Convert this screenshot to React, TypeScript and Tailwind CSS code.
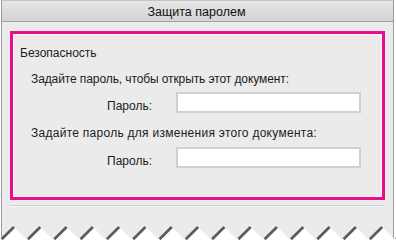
import React from "react";

export default function App() {
  const period = 26.3;
  const peaks = Array.from({ length: 16 }, (_, i) => 13 + period * i);
  const half = period / 2;
  let d = "M0,22 L-2,16 ";
  peaks.forEach((p) => {
    d += `L${(p - half).toFixed(2)},16 L${p.toFixed(2)},3 `;
  });
  d += `L${(peaks[peaks.length - 1] + half).toFixed(2)},16 L398,16 L398,22 Z`;

  return (
    <div
      className="relative w-[396px] h-[245px] bg-white overflow-hidden text-[#1b1b1b]"
      style={{ fontFamily: '"Liberation Sans", Arial, sans-serif' }}
    >
      <div className="ml-[1px] w-[393px] h-full border-x border-[#9c9c9c] bg-[#ebebeb] flex flex-col">
        {/* Title bar */}
        <div className="h-[22px] shrink-0 border-t border-[#c4c4c4] border-b border-b-[#a3a3a3] bg-gradient-to-b from-[#e6e6e6] to-[#d3d3d3] flex items-center justify-center">
          <span className="text-[12.5px] leading-[16px] px-[4px] mt-[1px] ml-[-2px] text-[#111]">
            Защита паролем
          </span>
        </div>

        {/* Group box highlighted */}
        <div className="mx-[8px] mt-[9px] h-[169px] border-[3px] border-[#ec0b8d] shadow-[inset_0_0_0_1px_#f6f8f6]">
          <div className="pt-[12px] text-[12px] leading-[14px]">
            <div className="pl-[7px]">Безопасность</div>
            <div className="pl-[18px] mt-[12px] tracking-[-0.1px]">
              Задайте пароль, чтобы открыть этот документ:
            </div>
            <div className="flex items-start mt-[6px]">
              <div className="w-[139px] text-right mt-[7px]">Пароль:</div>
              <div className="ml-[24px] w-[185px] h-[21px] bg-white border-2 border-[#d0d0d0]" />
            </div>
            <div className="pl-[18px] mt-[13px] tracking-[0.27px]">
              Задайте пароль для изменения этого документа:
            </div>
            <div className="flex items-start mt-[7px]">
              <div className="w-[139px] text-right mt-[7px]">Пароль:</div>
              <div className="ml-[24px] w-[185px] h-[21px] bg-white border-2 border-[#d0d0d0]" />
            </div>
          </div>
        </div>

        {/* Separator */}
        <div className="mx-[8px] mt-[5px] h-[2px] border-t border-[#cfcfcf] border-b border-b-[#f7f7f7]" />
      </div>

      {/* Torn edge */}
      <svg
        className="absolute left-0 bottom-0"
        width="396"
        height="22"
        viewBox="0 0 396 22"
      >
        <defs>
          <filter id="blur" x="-20%" y="-20%" width="140%" height="140%">
            <feGaussianBlur stdDeviation="0.7" />
          </filter>
          <clipPath id="white">
            <path d={d} />
          </clipPath>
        </defs>
        <path d={d} fill="#ffffff" />
        <g clipPath="url(#white)" filter="url(#blur)">
          {peaks.map((p, i) => (
            <line
              key={i}
              x1={p - half + 1.6}
              y1={16}
              x2={p + 1.6}
              y2={3}
              stroke="#4a4a4a"
              strokeWidth={3.2}
              strokeOpacity={0.9}
            />
          ))}
        </g>
      </svg>
    </div>
  );
}
